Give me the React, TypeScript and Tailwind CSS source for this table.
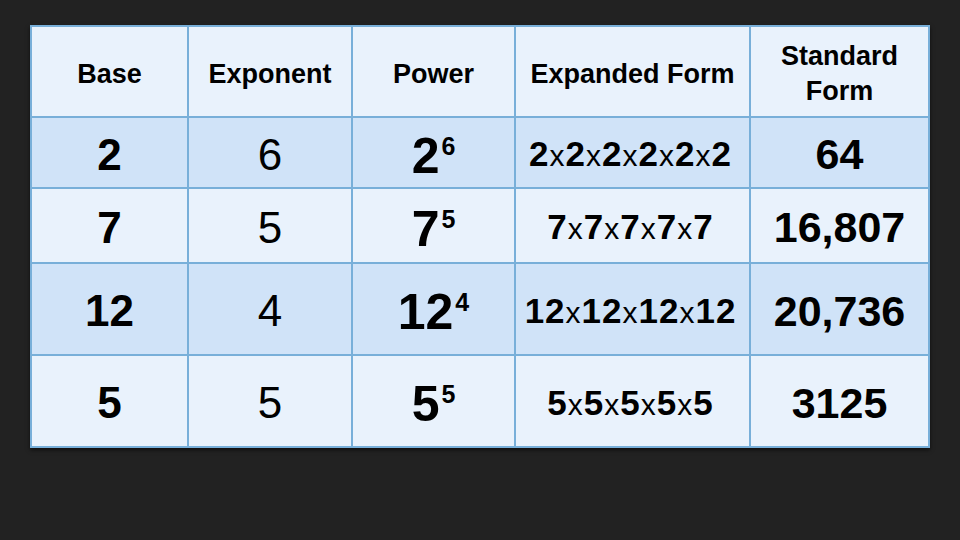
const rows = [
  { base: "2", exp: "6", parts: ["2", "2", "2", "2", "2", "2"], std: "64" },
  { base: "7", exp: "5", parts: ["7", "7", "7", "7", "7"], std: "16,807" },
  { base: "12", exp: "4", parts: ["12", "12", "12", "12"], std: "20,736" },
  { base: "5", exp: "5", parts: ["5", "5", "5", "5", "5"], std: "3125" },
]

const headers = ["Base", "Exponent", "Power", "Expanded Form", "Standard Form"]

function Expanded({ parts }: { parts: string[] }) {
  return (
    <span className="whitespace-nowrap tracking-[1px]">
      {parts.map((p, i) => (
        <span key={i}>
          {i > 0 && <span className="text-[30px] font-normal">x</span>}
          <span className="text-[35px] font-bold">{p}</span>
        </span>
      ))}
    </span>
  )
}

export default function App() {
  return (
    <div className="h-[540px] w-[960px] bg-[#222222] pl-[30px] pt-[25px] font-['Liberation_Sans',Arial,sans-serif] text-black">
      <div className="grid w-[900px] grid-cols-[155px_162px_161px_233px_177px] grid-rows-[89px_69px_73px_90px_90px] gap-[2px] bg-[#78afd9] p-[2px] shadow-[0_2px_4px_rgba(0,0,0,0.6)]">
        {headers.map((h) => (
          <div
            key={h}
            className="flex items-center justify-center bg-[#e9f2fc] px-2 pt-[5px] text-center text-[27px] font-bold leading-[35px]"
          >
            {h === "Standard Form" ? (
              <span>
                Standard
                <br />
                Form
              </span>
            ) : (
              h
            )}
          </div>
        ))}
        {rows.map((r, i) => {
          const bg = i % 2 === 0 ? "bg-[#d0e3f8]" : "bg-[#e9f2fc]"
          return [
            <div key={`b${i}`} className={`flex items-center justify-center pt-[4px] text-[44px] font-bold leading-none ${bg}`}>
              {r.base}
            </div>,
            <div key={`e${i}`} className={`flex items-center justify-center pt-[4px] text-[44px] font-normal leading-none ${bg}`}>
              {r.exp}
            </div>,
            <div key={`p${i}`} className={`flex items-center justify-center pt-[6px] ${bg}`}>
              <span className="inline-flex items-start leading-none">
                <span className="text-[50px] font-bold">{r.base}</span>
                <span className="ml-[2px] mt-[3px] text-[25px] font-bold">{r.exp}</span>
              </span>
            </div>,
            <div key={`x${i}`} className={`flex items-center justify-center pr-[4px] pt-[2px] leading-none ${bg}`}>
              <Expanded parts={r.parts} />
            </div>,
            <div key={`s${i}`} className={`flex items-center justify-center pt-[4px] text-[43px] font-bold leading-none ${bg}`}>
              {r.std}
            </div>,
          ]
        })}
      </div>
    </div>
  )
}
